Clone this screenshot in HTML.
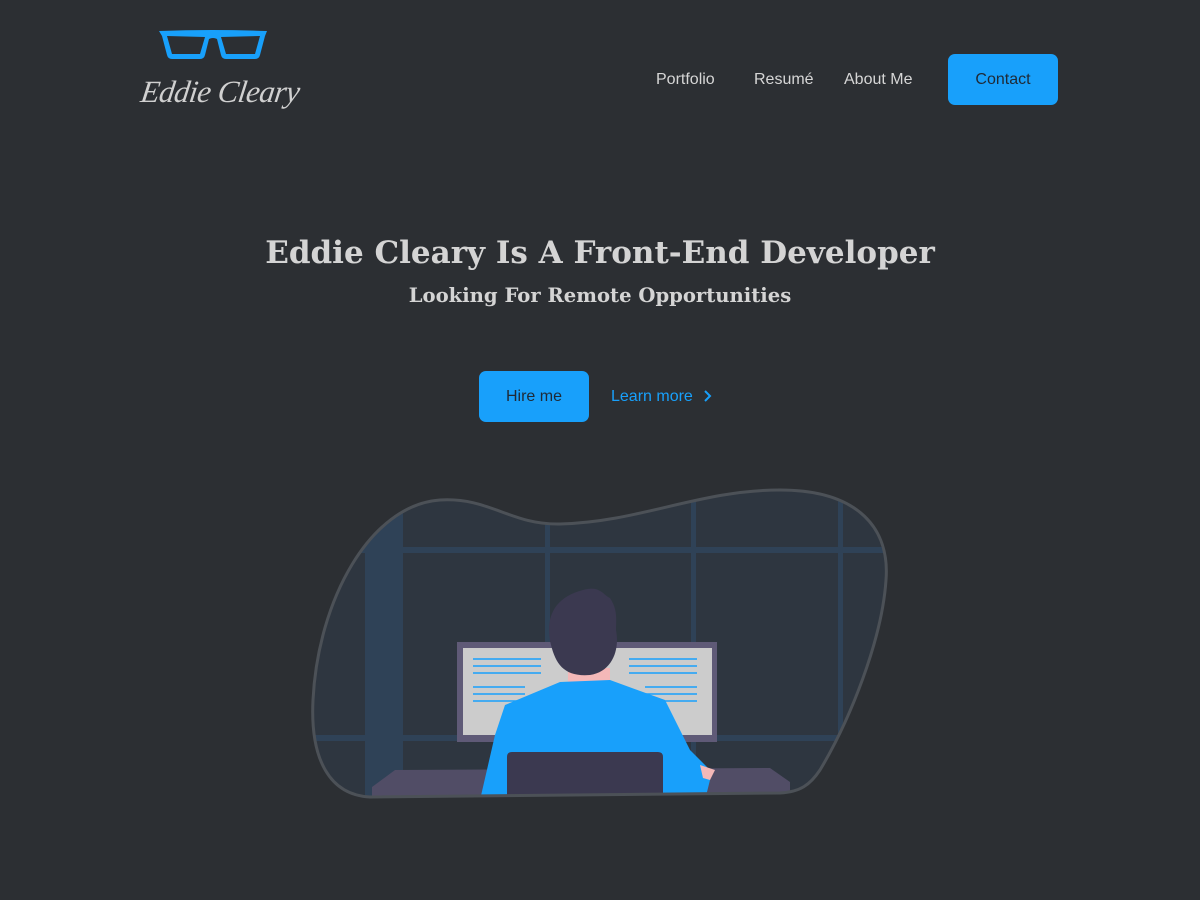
<!DOCTYPE html>
<html><head><meta charset="utf-8"><style>
*{margin:0;padding:0;box-sizing:border-box}
body{width:1200px;height:900px;background:#2c2f33;font-family:"Liberation Sans",sans-serif;position:relative;overflow:hidden;color:#d6d6d6}
.nav a{position:absolute;top:71px;font-size:16px;color:#d6d6d6;text-decoration:none}
.btn{position:absolute;background:#18a0fb;border-radius:7px;color:#1f2a36;font-size:16px;display:flex;align-items:center;justify-content:center}
h1{position:absolute;top:235px;left:0;width:1200px;text-align:center;font-family:"DejaVu Serif","Liberation Serif",serif;font-weight:bold;font-size:31px;color:#d4d4d4}
h2{position:absolute;top:284px;left:0;width:1200px;text-align:center;font-family:"DejaVu Serif","Liberation Serif",serif;font-weight:bold;font-size:19.6px;color:#d4d4d4}
.logo{position:absolute;left:141px;top:74px;font-family:"Liberation Serif",serif;font-style:italic;font-size:31px;color:#d0d0d0;letter-spacing:-0.5px;transform:skewX(-8deg)}
</style></head><body>
<svg style="position:absolute;left:156px;top:28px" width="114" height="34" viewBox="0 0 114 34">
<path d="M3,3 Q55,1 111,3 L109,8 L104,27 Q103,31 99,31 L70,31 Q66,31 65,27 L61,11 Q57,9 53,11 L49,27 Q48,31 44,31 L16,31 Q12,31 11,27 L6,8 Z M11,8 L16,26 L44,26 L49,9 Z M65,9 L70,26 L99,26 L104,8 Z" fill="#18a0fb" fill-rule="evenodd"/>
</svg>
<div class="logo">Eddie Cleary</div>
<div class="nav"><a style="left:656px">Portfolio</a><a style="left:754px">Resumé</a><a style="left:844px">About Me</a></div>
<div class="btn" style="left:948px;top:54px;width:110px;height:51px">Contact</div>
<h1>Eddie Cleary Is A Front-End Developer</h1>
<h2>Looking For Remote Opportunities</h2>
<div class="btn" style="left:479px;top:371px;width:110px;height:51px">Hire me</div>
<div style="position:absolute;left:611px;top:388px;font-size:16px;color:#18a0fb">Learn more</div>
<svg style="position:absolute;left:702px;top:389px" width="12" height="14"><path d="M3,2 L8,7 L3,12" stroke="#18a0fb" stroke-width="2" fill="none"/></svg>
<svg style="position:absolute;left:0;top:0" width="1200" height="900">
<defs><clipPath id="c"><path d="M370,797 C330,795 310,760 313,700 C318,600 370,505 440,500 C490,497 510,525 560,524 C640,522 700,490 780,490 C860,490 890,530 886,580 C882,640 850,720 820,770 C810,785 800,792 780,793 Z"/></clipPath></defs>
<path d="M370,797 C330,795 310,760 313,700 C318,600 370,505 440,500 C490,497 510,525 560,524 C640,522 700,490 780,490 C860,490 890,530 886,580 C882,640 850,720 820,770 C810,785 800,792 780,793 Z" fill="#2e3640"/>
<g clip-path="url(#c)">
<rect x="365" y="480" width="38" height="330" fill="#2f4257"/>
<rect x="300" y="547" width="600" height="6" fill="#2f4257"/>
<rect x="300" y="735" width="600" height="6" fill="#2f4257"/>
<rect x="545" y="480" width="5" height="330" fill="#2f4257"/>
<rect x="691" y="480" width="5" height="330" fill="#2f4257"/>
<rect x="838" y="480" width="5" height="330" fill="#2f4257"/>
<rect x="457" y="642" width="260" height="100" fill="#5f5a77"/>
<rect x="463" y="648" width="249" height="87" fill="#cccccc"/>
<g stroke="#18a0fb" stroke-width="1.5">
<path d="M473,659H541M473,666H541M473,673H541M473,687H525M473,694H525M473,701H525M629,659H697M629,666H697M629,673H697M645,687H697M645,694H697M645,701H697"/></g>
<path d="M372,787 L395,770 L770,768 L790,782 L790,800 L372,800Z" fill="#514d66"/>
<rect x="568" y="668" width="42" height="20" fill="#f4b8b8"/>
<path d="M583,590 C600,585 603,595 610,598 C618,610 616,620 616,630 C620,650 612,672 590,675 C565,677 556,665 551,645 C545,620 552,598 583,590Z" fill="#3b3950"/>
<path d="M505,705 L560,682 L610,680 L665,700 L690,750 L712,772 L705,800 L480,800 L495,735Z" fill="#18a0fb"/>
<path d="M700,765 L715,770 L710,780 L703,778Z" fill="#f4b8b8"/>
<path d="M512,752 L658,752 Q663,752 663,757 L663,800 L507,800 L507,757 Q507,752 512,752Z" fill="#3b3950"/>
</g>
<path d="M370,797 C330,795 310,760 313,700 C318,600 370,505 440,500 C490,497 510,525 560,524 C640,522 700,490 780,490 C860,490 890,530 886,580 C882,640 850,720 820,770 C810,785 800,792 780,793 Z" fill="none" stroke="#4c5157" stroke-width="3"/>
</svg>
</body></html>
